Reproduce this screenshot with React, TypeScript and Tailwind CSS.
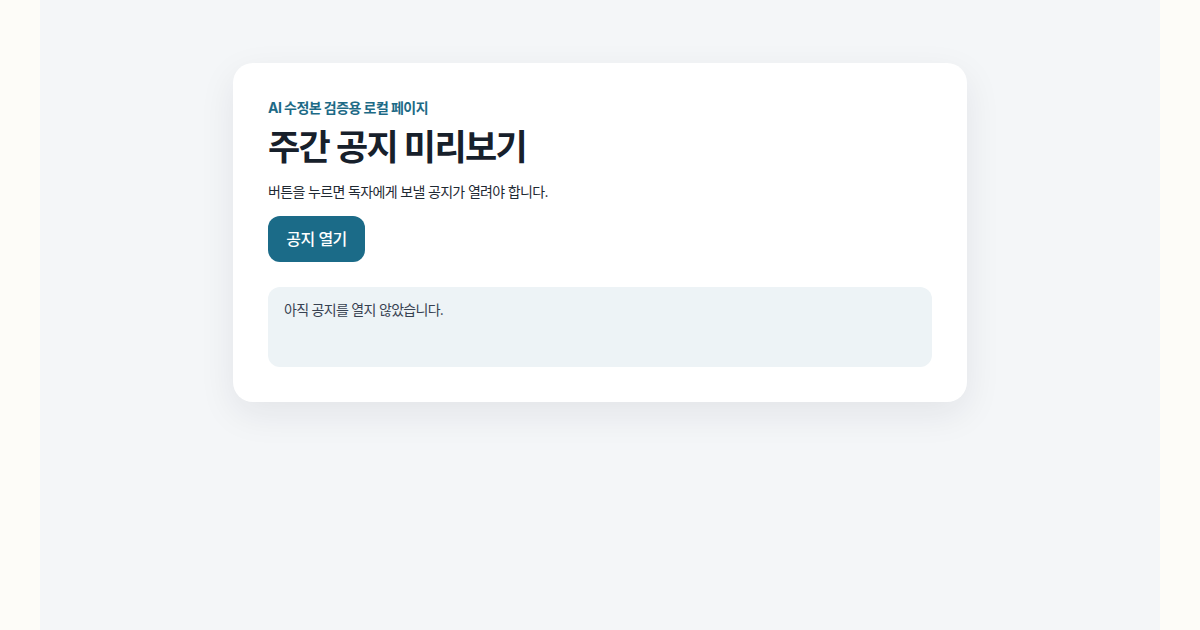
import React, { useState } from 'react';

const App: React.FC = () => {
  const [opened, setOpened] = useState(false);

  return (
    <div
      className="min-h-screen bg-[#fdfcf8]"
      style={{ fontFamily: 'Inter, "Noto Sans CJK KR", sans-serif' }}
    >
      <div className="mx-auto min-h-screen w-[1120px] bg-[#f4f6f8] pt-[63px]">
        <div className="mx-auto w-[734px] rounded-[20px] bg-white px-[35px] pt-[35px] pb-[35px] shadow-[0_12px_36px_rgba(20,30,45,0.08)]">
          <p className="text-[14px] leading-[20px] font-bold tracking-[-0.55px] text-[#1d6a86]">
            AI 수정본 검증용 로컬 페이지
          </p>
          <h1 className="mt-[8px] text-[35px] leading-[42px] font-bold tracking-[-1.6px] text-[#17202b]">
            주간 공지 미리보기
          </h1>
          <p className="mt-[12px] text-[14px] leading-[24px] tracking-[-0.65px] text-[#1f2933]">
            버튼을 누르면 독자에게 보낼 공지가 열려야 합니다.
          </p>
          <button
            onClick={() => setOpened(true)}
            className="mt-[12px] h-[46px] w-[97px] rounded-[12px] bg-[#1b6b88] text-[16px] font-medium tracking-[-0.5px] text-white"
          >
            공지 열기
          </button>
          <div className="mt-[25px] h-[80px] rounded-[12px] bg-[#edf3f6] px-[16px] py-[13px] text-[14px] leading-[20px] tracking-[-0.7px] text-[#374151]">
            {opened ? '이번 주 공지가 열렸습니다.' : '아직 공지를 열지 않았습니다.'}
          </div>
        </div>
      </div>
    </div>
  );
};

export default App;
